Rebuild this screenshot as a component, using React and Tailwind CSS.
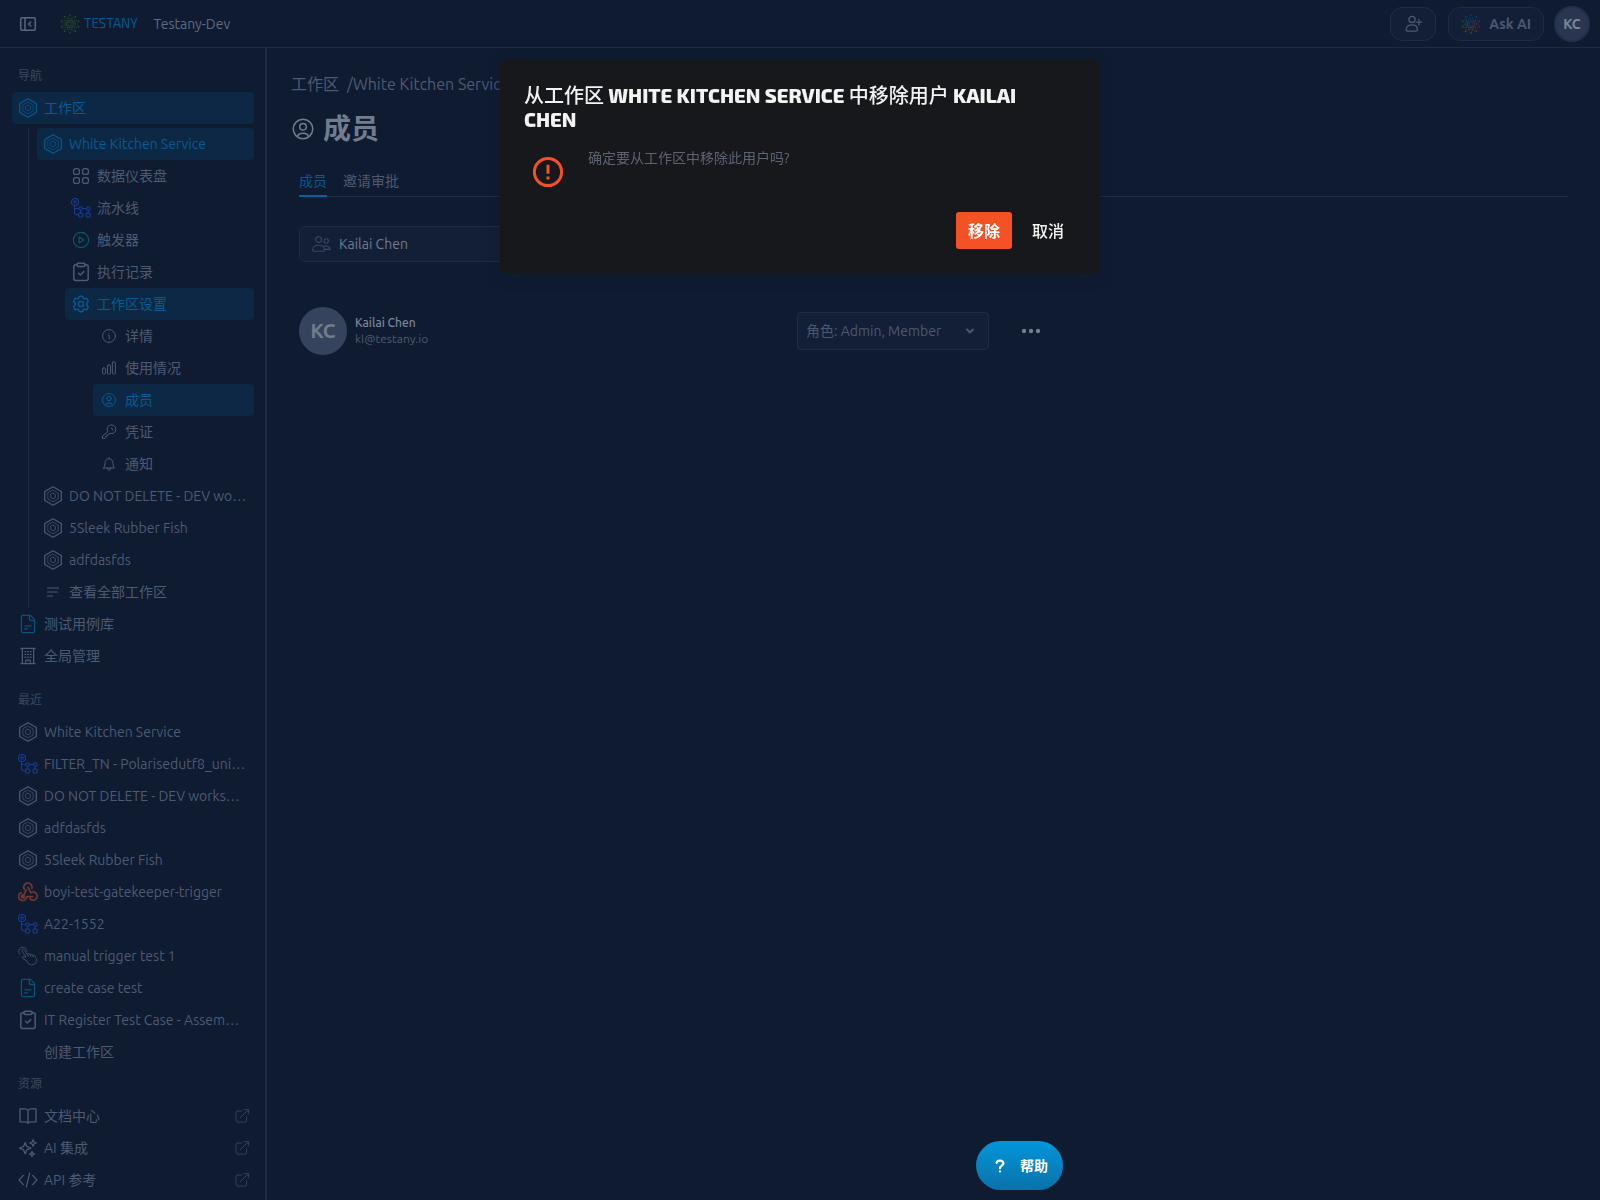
import React from "react";

function Svg({ size = 20, vb = 24, sw = 1.5, className = "", children }) {
  return (
    <svg
      width={size}
      height={size}
      viewBox={`0 0 ${vb} ${vb}`}
      fill="none"
      stroke="currentColor"
      strokeWidth={sw}
      strokeLinecap="round"
      strokeLinejoin="round"
      aria-hidden="true"
      className={"shrink-0 " + className}
    >
      {children}
    </svg>
  );
}

const Hex = () => (
  <Svg vb={20} sw={1.2}>
    <path d="M10 0.8L18.3 5.4V14.6L10 19.2L1.7 14.6V5.4Z" />
    <path d="M10 4.2L15.2 7.1V12.9L10 15.8L4.8 12.9V7.1Z" strokeWidth="1" opacity="0.7" />
    <path d="M10 7.2L12.4 8.6V11.4L10 12.8L7.6 11.4V8.6Z" strokeWidth="1" opacity="0.8" />
  </Svg>
);

const Panel = () => (
  <Svg size={18} vb={18} sw={1.5}>
    <rect x="1.7" y="2.7" width="14.6" height="12.6" rx="1.5" />
    <path d="M6 3v12" />
    <path d="M11.8 7L9.6 9l2.2 2" />
  </Svg>
);

const Dashboard = () => (
  <Svg vb={20} sw={1.3}>
    <rect x="2.6" y="2.6" width="5.8" height="5.8" rx="2.2" />
    <rect x="11.6" y="2.6" width="5.8" height="5.8" rx="2.2" />
    <rect x="2.6" y="11.6" width="5.8" height="5.8" rx="2.2" />
    <rect x="11.6" y="11.6" width="5.8" height="5.8" rx="2.2" />
  </Svg>
);

const Pipeline = () => (
  <Svg vb={20} sw={1.1} className="text-[#173d94]">
    <circle cx="4" cy="4" r="3.5" />
    <circle cx="4" cy="4" r="1.2" />
    <path d="M3.5 7.5V14Q3.5 17 7 17M3.5 10.5H7.5M11.6 10.5H15.4" />
    <circle cx="9.6" cy="10.5" r="1.8" />
    <circle cx="17.4" cy="10.5" r="1.8" />
    <circle cx="9.6" cy="17" r="2.2" />
    <circle cx="17.2" cy="17" r="2.2" />
    <path d="M9.6 12.4v2.3M17.2 12.4v2.3" />
  </Svg>
);

const Play = () => (
  <Svg vb={20} sw={1.1} className="text-[#0c5a68]">
    <circle cx="10" cy="10" r="7.6" />
    <path d="M8 7L13 10L8 13Z" />
  </Svg>
);

const Clipboard = () => (
  <Svg vb={20} sw={1.5}>
    <path d="M6 2.8H4.8a2 2 0 0 0-2 2v11.8a2 2 0 0 0 2 2h10.4a2 2 0 0 0 2-2V4.8a2 2 0 0 0-2-2H14" />
    <rect x="6" y="1.3" width="8" height="3.2" rx="1.2" />
    <path d="M7.6 11.2l1.8 1.8 3.4-3.4" />
  </Svg>
);

const Gear = () => (
  <Svg vb={20} sw={1.4}>
    <circle cx="10" cy="10" r="2.6" />
    <path d="M8 3.2Q8.2 2.3 9.1 2.3H10.9Q11.8 2.3 12 3.2L12.2 4.1Q12.8 5 13.8 4.8L14.8 4.4Q15.7 4.1 16.2 4.9L17.1 6.5Q17.5 7.3 16.8 7.9L16 8.7Q15.3 10 16 11.3L16.8 12.1Q17.5 12.7 17.1 13.5L16.2 15.1Q15.7 15.9 14.8 15.6L13.8 15.2Q12.8 15 12.2 15.9L12 16.8Q11.8 17.7 10.9 17.7H9.1Q8.2 17.7 8 16.8L7.8 15.9Q7.2 15 6.2 15.2L5.2 15.6Q4.3 15.9 3.8 15.1L2.9 13.5Q2.5 12.7 3.2 12.1L4 11.3Q4.7 10 4 8.7L3.2 7.9Q2.5 7.3 2.9 6.5L3.8 4.9Q4.3 4.1 5.2 4.4L6.2 4.8Q7.2 5 7.8 4.1Z" />
  </Svg>
);

const Info = () => (
  <Svg size={16} vb={16} sw={1}>
    <circle cx="8" cy="8" r="6.4" />
    <path d="M7.3 7.4H8.2V11M8 5.2v.1" />
  </Svg>
);

const Bars = () => (
  <Svg size={16} vb={16} sw={1}>
    <rect x="1.6" y="8" width="3" height="6" rx="0.8" />
    <rect x="6.5" y="5" width="3" height="9" rx="0.8" />
    <rect x="11.4" y="2" width="3" height="12" rx="0.8" />
  </Svg>
);

const UserCircle = ({ size = 16, sw = 1 }) => (
  <Svg size={size} vb={16} sw={sw}>
    <circle cx="8" cy="8" r="6.5" />
    <circle cx="8" cy="6.5" r="2.2" />
    <path d="M4.4 13Q4.8 10.9 8 10.9T11.6 13" />
  </Svg>
);

const Key = () => (
  <Svg size={16} vb={16} sw={1}>
    <path d="M6.6 7.4A4.4 4.4 0 1 1 9 9.4L7.4 10.6H6.4V12.1H4.9V13.6L4.1 14.4H1.5V12.4Z" />
    <path d="M10.2 4.2Q12 4.2 12 6" />
  </Svg>
);

const Bell = () => (
  <Svg size={16} vb={16} sw={1}>
    <path d="M2.6 12H13.4Q12 10.4 12 7.4C12 4.4 10.3 2.7 8 2.7S4 4.4 4 7.4Q4 10.4 2.6 12Z" />
    <path d="M6.4 12.2Q6.6 14.2 8 14.2T9.6 12.2M8 1.6v1" />
  </Svg>
);

const Lines = () => (
  <Svg size={20} vb={20} sw={1.2}>
    <path d="M4.5 6H15.5M4.5 10H14.5M4.5 14H9.5" />
  </Svg>
);

const Doc = () => (
  <Svg vb={20} sw={1.3} className="text-[#07547a]">
    <path d="M12.5 1.4H5.2a1.8 1.8 0 0 0-1.8 1.8v13.6a1.8 1.8 0 0 0 1.8 1.8h9.6a1.8 1.8 0 0 0 1.8-1.8V5.6Z" />
    <path d="M11.4 1.6V4.6Q11.4 6.6 13.4 6.6H16.4M6.6 14.8H9.5M7 11.8H13" />
  </Svg>
);

const Building = () => (
  <Svg vb={20} sw={1.2}>
    <path d="M3 17.6H17M4.4 17.4V2.4H15.6V17.4M2.8 2.4H17.2M7.8 17.4V14.2H12.2V17.4" />
    <path d="M7 5.6h.8M9.7 5.6h.8M12.4 5.6h.8M7 8.4h.8M9.7 8.4h.8M12.4 8.4h.8M7 11.2h.8M9.7 11.2h.8M12.4 11.2h.8" />
  </Svg>
);

const Webhook = () => (
  <Svg vb={20} sw={1.7} className="text-[#74372f]">
    <path d="M6.6 7.6A4.1 4.1 0 1 1 13.8 6.2" />
    <path d="M10 5.2L12.9 10.8A4 4 0 1 1 12 16.6" />
    <path d="M8.4 8.2L4.9 14.4M3.2 10.8A4 4 0 1 0 8.6 14.6H14.6" />
    <circle cx="4.9" cy="14.4" r="1.4" fill="currentColor" />
  </Svg>
);

const Hand = () => (
  <Svg vb={20} sw={1} className="text-[#3f4b63]">
    <path d="M2 8.4A4.2 4.2 0 1 1 9 5.2" />
    <path d="M8 14.4L4.5 12.2Q3.6 11 5 10.3L8 11.2L4 4.8Q3.6 3.2 5 3Q5.8 3 6.3 3.8L9.4 8.8Q9.4 7.2 10.8 7.4L12 9Q12.2 7.6 13.6 8L14.8 9.8Q15.2 8.6 16.3 9.2Q19.6 12.8 18.8 15.4Q17.4 18.6 13.6 19Q9.6 18.4 8 14.4" />
    <path d="M9.4 8.8L10.6 10.8M12 9L13 10.6M14.8 9.8L15.4 10.9" />
  </Svg>
);

const Book = () => (
  <Svg vb={20} sw={1.3}>
    <path d="M10 4.4Q9 2.9 6.8 2.9H2V15.8H7.4Q9.3 15.8 10 17.4Q10.7 15.8 12.6 15.8H18V2.9H13.2Q11 2.9 10 4.4V17.2" />
  </Svg>
);

const Sparkles = () => (
  <Svg vb={20} sw={1.3}>
    <path d="M7.2 4.6L8.8 8.5L12.8 10.2L8.8 11.9L7.2 15.8L5.6 11.9L1.6 10.2L5.6 8.5Z" />
    <path d="M15 1.8L15.9 4L18.2 5L15.9 6L15 8.2L14.1 6L11.8 5L14.1 4Z" />
    <path d="M14 13.4L14.7 15.2L16.6 16L14.7 16.8L14 18.6L13.3 16.8L11.4 16L13.3 15.2Z" />
  </Svg>
);

const Code = () => (
  <Svg vb={20} sw={1.2}>
    <path d="M5.4 5.4L1 10L5.4 14.6M14.6 5.4L19 10L14.6 14.6M11.6 3.2L8.4 16.8" />
  </Svg>
);

const External = () => (
  <Svg size={16} vb={16} sw={1} className="text-[#364259]">
    <path d="M8 3H4Q2 3 2 5V12Q2 14.2 4 14.2H10.6Q12.6 14.2 12.6 12V8" />
    <path d="M6 10L14.2 1.8M10.2 1.6H14.4V5.8" />
  </Svg>
);

const Users = () => (
  <Svg size={20} vb={20} sw={1.1}>
    <circle cx="7.6" cy="5.6" r="2.9" />
    <circle cx="15.2" cy="7" r="2.2" />
    <path d="M1.6 15.4Q2 11.2 7.6 11.2T13.6 15.4Q13.6 17.2 12 17.2H3.2Q1.6 17.2 1.6 15.4ZM13 12.2Q18.4 11.2 19 15.4H14" />
  </Svg>
);

const UserPlus = () => (
  <Svg size={20} vb={20} sw={1.3}>
    <circle cx="9" cy="5.4" r="3.1" />
    <path d="M3.2 15.4Q3.6 10.8 9 10.8T14.4 15.4Q14.4 17.2 12.6 17.2H5Q3.2 17.2 3.2 15.4ZM16 5.4V11M13.2 8.2H18.8" />
  </Svg>
);

const spokes = [0, 36, 72, 108, 144, 180, 216, 252, 288, 324];

function Atom({ size, colors }) {
  return (
    <svg width={size} height={size} viewBox="-10 -10 20 20" fill="none" aria-hidden="true" className="shrink-0">
      {spokes.map((a, i) => (
        <g key={a} transform={`rotate(${a})`} stroke={colors[i]} strokeWidth="0.4">
          <path d="M0 -2L0 -8.6M0 -9L3.2 -6.2L5.3 -7.3M-2.4 -3.6L1.8 -4.4" opacity="0.4" />
          <circle cx="0" cy="-9" r="0.5" fill={colors[i]} />
          <circle cx="1.8" cy="-5.6" r="0.4" fill={colors[i]} />
          <circle cx="0" cy="-3.6" r="0.4" fill={colors[i]} />
        </g>
      ))}
      <circle r="2" stroke={colors[0]} strokeWidth="0.5" />
    </svg>
  );
}

const greens = Array(10).fill("#34602c");
const rainbow = [
  "#0d4f80", "#0d4f80", "#7a3040", "#7a3040", "#6d5720",
  "#6d5720", "#6d5720", "#2c6a3d", "#2c6a3d", "#0d4f80",
];

function Row({ icon, label, active, external }) {
  return (
    <a
      href="#"
      className={
        "flex h-8 items-center gap-1.5 rounded pr-1 pl-1.5 text-sm " +
        (active ? "bg-[#0d2844] text-[#055b94]" : "text-[#4e5a72]")
      }
    >
      <span className="flex size-5 shrink-0 items-center justify-center">{icon}</span>
      <span className="flex-1 whitespace-nowrap">{label}</span>
      {external && <External />}
    </a>
  );
}

function Heading({ children }) {
  return <h2 className="flex h-8 items-center px-1.5 text-xs text-[#3c4860]">{children}</h2>;
}

function Sidebar() {
  return (
    <nav className="w-[267px] shrink-0 border-r-2 border-[#1f2b42] pt-3 pr-[11px] pl-3" aria-label="导航">
      <Heading>导航</Heading>
      <Row icon={<Hex />} label="工作区" active />
      <div className="mt-1 ml-4 border-l border-[#202c43] pl-2">
        <Row icon={<Hex />} label="White Kitchen Service" active />
        <div className="ml-7">
          <Row icon={<Dashboard />} label="数据仪表盘" />
          <Row icon={<Pipeline />} label="流水线" />
          <Row icon={<Play />} label="触发器" />
          <Row icon={<Clipboard />} label="执行记录" />
          <Row icon={<Gear />} label="工作区设置" active />
          <div className="ml-7">
            <Row icon={<Info />} label="详情" />
            <Row icon={<Bars />} label="使用情况" />
            <Row icon={<UserCircle />} label="成员" active />
            <Row icon={<Key />} label="凭证" />
            <Row icon={<Bell />} label="通知" />
          </div>
        </div>
        <Row icon={<Hex />} label="DO NOT DELETE - DEV wo…" />
        <Row icon={<Hex />} label="5Sleek Rubber Fish" />
        <Row icon={<Hex />} label="adfdasfds" />
        <Row icon={<Lines />} label="查看全部工作区" />
      </div>
      <Row icon={<Doc />} label="测试用例库" />
      <Row icon={<Building />} label="全局管理" />
      <div className="mt-3">
        <Heading>最近</Heading>
        <Row icon={<Hex />} label="White Kitchen Service" />
        <Row icon={<Pipeline />} label="FILTER_TN - Polarisedutf8_uni…" />
        <Row icon={<Hex />} label="DO NOT DELETE - DEV works…" />
        <Row icon={<Hex />} label="adfdasfds" />
        <Row icon={<Hex />} label="5Sleek Rubber Fish" />
        <Row icon={<Webhook />} label="boyi-test-gatekeeper-trigger" />
        <Row icon={<Pipeline />} label="A22-1552" />
        <Row icon={<Hand />} label="manual trigger test 1" />
        <Row icon={<Doc />} label="create case test" />
        <Row icon={<Clipboard />} label="IT Register Test Case - Assem…" />
        <Row icon={null} label="创建工作区" />
      </div>
      <Heading>资源</Heading>
      <Row icon={<Book />} label="文档中心" external />
      <Row icon={<Sparkles />} label="AI 集成" external />
      <Row icon={<Code />} label="API 参考" external />
    </nav>
  );
}

function Header() {
  return (
    <header className="flex h-12 items-center border-b border-[#1f2b42] pr-2.5 pl-4.5">
      <button type="button" aria-label="收起侧栏" className="flex size-5 items-center justify-center text-[#5a667c]">
        <Panel />
      </button>
      <a href="#" className="ml-5.5 flex items-center gap-1 font-['Exo_2','Noto_Sans',sans-serif] text-[13px] text-[#06588f]">
        <Atom size={20} colors={greens} />
        TESTANY
      </a>
      <span className="ml-4 text-sm text-[#5f6b81]">Testany-Dev</span>
      <div className="ml-auto flex items-center gap-3">
        <button
          type="button"
          aria-label="邀请用户"
          className="flex h-[34px] w-[46px] items-center justify-center rounded-xl border border-[#1f2b42] bg-[#131f36] text-[#4c5870]"
        >
          <UserPlus />
        </button>
        <button
          type="button"
          className="flex h-[34px] items-center gap-2 rounded-xl border border-[#1f2b42] bg-[#131f36] px-3 text-sm font-bold text-[#4c5870]"
        >
          <Atom size={20} colors={rainbow} />
          Ask AI
        </button>
        <button
          type="button"
          className="-ml-0.5 flex size-9 items-center justify-center rounded-full border-2 border-[#243049] bg-[#2a3650] text-sm font-bold text-[#7b8698]"
        >
          KC
        </button>
      </div>
    </header>
  );
}

function Members() {
  return (
    <main className="min-w-0 flex-1 pt-6 pr-8 pl-6">
      <nav aria-label="路径" className="flex h-6 items-center text-base text-[#4e5a72]">
        <a href="#">工作区</a>
        <span className="ml-2">/</span>
        <a href="#">White Kitchen Service</a>
      </nav>
      <h1 className="mt-2 flex h-[50px] items-center gap-2 text-[28px] font-bold text-[#717c8d]">
        <UserCircle size={24} sw={1} />
        成员
      </h1>
      <div className="pl-2">
        <div role="tablist" className="mt-2.5 flex h-[33px] gap-4 border-b border-[#202c43] text-sm">
          <button type="button" role="tab" aria-selected="true" className="-mb-px border-b-2 border-[#05619e] pt-0.5 text-[#055b94]">
            成员
          </button>
          <button type="button" role="tab" aria-selected="false" className="pt-0.5 text-[#4e5a72]">
            邀请审批
          </button>
        </div>
        <label className="mt-[29px] flex h-9 w-[480px] items-center gap-2 rounded-md border border-[#202c43] bg-[#131f36] px-[11px] text-[#3a465f]">
          <Users />
          <input
            aria-label="搜索成员"
            defaultValue="Kailai Chen"
            className="min-w-0 flex-1 bg-transparent text-sm text-[#717c8d] outline-none"
          />
        </label>
        <div className="mt-[45px] flex items-center">
          <div className="flex w-[498px] items-center gap-2">
            <span className="flex size-12 items-center justify-center rounded-full bg-[#36435c] text-xl font-bold text-[#717c8d]">
              KC
            </span>
            <div className="text-xs text-[#4e5a72]">
              <div className="font-medium text-[#7b8698]">Kailai Chen</div>
              <div>kl@testany.io</div>
            </div>
          </div>
          <div className="relative">
            <select
              aria-label="角色"
              className="h-[38px] w-48 appearance-none rounded border border-[#202c43] bg-[#131f36] pl-2 text-sm text-[#4c5870]"
            >
              <option>角色: Admin, Member</option>
            </select>
            <Svg size={14} vb={14} sw={2} className="pointer-events-none absolute top-3 right-3 text-[#4c5870]">
              <path d="M4 5.5L7 8.5L10 5.5" />
            </Svg>
          </div>
          <button type="button" aria-label="更多" className="ml-8 text-[#717c8d]">
            <svg width="20" height="20" viewBox="0 0 20 20" fill="currentColor" aria-hidden="true">
              <circle cx="3" cy="10" r="2.2" />
              <circle cx="10" cy="10" r="2.2" />
              <circle cx="17" cy="10" r="2.2" />
            </svg>
          </button>
        </div>
      </div>
    </main>
  );
}

function ConfirmDialog() {
  return (
    <div className="pointer-events-none fixed inset-0 flex items-start justify-center pt-[59px]">
      <section
        role="alertdialog"
        aria-labelledby="dialog-title"
        className="pointer-events-auto w-[600px] rounded-md bg-[#17181c] p-6 shadow-[0_4px_12px_rgba(17,29,46,0.8)]"
      >
        <h2
          id="dialog-title"
          className="pr-8 font-['Exo_2','Open_Sans','Noto_Sans_CJK_SC',sans-serif] text-xl leading-6 font-extrabold text-[#f3f3f3] uppercase"
        >
          <span className="font-medium">从工作区</span> White Kitchen Service{" "}
          <span className="font-medium">中移除用户</span> Kailai Chen
        </h2>
        <div className="mt-[17px] flex gap-6 pl-2">
          <svg width="32" height="32" viewBox="0 0 32 32" fill="none" stroke="#f45125" strokeWidth="3" aria-hidden="true" className="mt-2 shrink-0">
            <circle cx="16" cy="16" r="13.6" />
            <path d="M16 8.8v9M16 20.4v3.2" />
          </svg>
          <p className="text-sm text-[#5d6373]">确定要从工作区中移除此用户吗?</p>
        </div>
        <div className="mt-6 flex justify-end gap-2">
          <button type="button" className="h-[37px] rounded-[3px] bg-[#f45125] px-3 text-base font-bold text-white">
            移除
          </button>
          <button type="button" className="h-[37px] px-3 text-base font-medium text-[#f3f3f3]">
            取消
          </button>
        </div>
      </section>
    </div>
  );
}

export default function App() {
  return (
    <div className="flex min-h-screen flex-col bg-[#0f1b31] font-['Ubuntu','Noto_Sans','Noto_Sans_CJK_SC',sans-serif]">
      <Header />
      <div className="flex flex-1">
        <Sidebar />
        <Members />
      </div>
      <ConfirmDialog />
      <button
        type="button"
        className="fixed bottom-2.5 left-[61%] flex h-[49px] items-center gap-3 rounded-full bg-linear-to-t from-[#0a72a9] to-[#0196dc] pr-[15px] pl-4 text-sm font-bold text-white"
      >
        <Svg size={16} vb={16} sw={2.2}>
          <path d="M4.6 4.8Q5 2.6 8 2.6T11.4 5.2Q11.4 6.8 9.6 7.7Q8 8.5 8 10.2M8 13.4v.1" />
        </Svg>
        帮助
      </button>
    </div>
  );
}
